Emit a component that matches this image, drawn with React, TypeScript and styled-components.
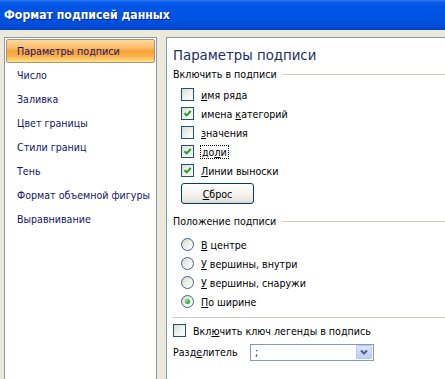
import React from "react";
import styled, { createGlobalStyle } from "styled-components";

const GlobalStyle = createGlobalStyle`
  html, body {
    margin: 0;
    padding: 0;
    background: #ece9d8;
  }
  body {
    font-family: "DejaVu Sans Condensed", "DejaVu Sans", Verdana, sans-serif;
    font-size: 10.6px;
    color: #000;
  }
`;

const Window = styled.div`
  width: 445px;
  height: 379px;
  overflow: hidden;
  display: flex;
  flex-direction: column;
  background: #ece9d8;
`;

const TitleBar = styled.div`
  height: 30px;
  flex: 0 0 auto;
  display: flex;
  align-items: center;
  padding-left: 4px;
  background: linear-gradient(
    #2a7af5 0%,
    #0a5ee8 8%,
    #0055e5 20%,
    #0053e1 60%,
    #004bd6 90%,
    #0041c4 100%
  );
  color: #fff;
  font-family: "DejaVu Sans Condensed", "DejaVu Sans", Verdana, sans-serif;
  font-weight: bold;
  font-size: 12.2px;
  text-shadow: 1px 1px 0 #0b2a8a;
`;

const Body = styled.div`
  flex: 1;
  display: flex;
  gap: 9px;
  padding: 7px 0 0 4px;
  min-height: 0;
`;

const Sidebar = styled.div`
  width: 153px;
  box-sizing: border-box;
  background: #fff;
  border: 1px solid #7f9db9;
  border-bottom: none;
  padding: 1px;
  display: flex;
  flex-direction: column;
`;

const NavItem = styled.div<{ $active?: boolean }>`
  height: 24px;
  box-sizing: border-box;
  line-height: 22px;
  padding-left: 10px;
  color: #15156a;
  white-space: nowrap;
  border: 1px solid ${(p) => (p.$active ? "#b3946a" : "transparent")};
  border-radius: 2px;
  background: ${(p) =>
    p.$active
      ? "linear-gradient(#fdd8a0 0%, #fbbd6c 35%, #f8a03a 50%, #fbb350 75%, #ffe286 100%)"
      : "transparent"};
`;

const Panel = styled.div`
  flex: 1;
  background: #fff;
  border-left: 1px solid #7f9db9;
  border-top: 1px solid #7f9db9;
  padding: 7px 0 0 6px;
  display: flex;
  flex-direction: column;
`;

const Heading = styled.div`
  font-size: 14.8px;
  line-height: 20px;
  height: 20px;
  color: #1c2f5c;
  margin-bottom: 2px;
`;

const GroupHeader = styled.div<{ $top?: number }>`
  display: flex;
  align-items: center;
  height: 14px;
  line-height: 14px;
  white-space: nowrap;
  margin-top: ${(p) => p.$top ?? 0}px;
  &::after {
    content: "";
    flex: 1;
    height: 1px;
    margin-left: 6px;
    background: #cfccc0;
  }
`;

const Group = styled.div<{ $top: number }>`
  display: flex;
  flex-direction: column;
  padding-left: 8px;
  margin-top: ${(p) => p.$top}px;
`;

const Row = styled.label`
  display: flex;
  align-items: center;
  gap: 7px;
  height: 19px;
  white-space: nowrap;
`;

const Box = styled.span`
  width: 13px;
  height: 13px;
  box-sizing: border-box;
  flex: 0 0 auto;
  border: 1px solid #1c5180;
  background: linear-gradient(135deg, #dcdcd7 0%, #f2f2ee 55%, #ffffff 100%);
  display: flex;
  align-items: center;
  justify-content: center;
`;

const Radio = styled.span`
  width: 13px;
  height: 13px;
  box-sizing: border-box;
  flex: 0 0 auto;
  border-radius: 50%;
  border: 1px solid #3b6292;
  background: linear-gradient(135deg, #d6d6cf 0%, #f1f1ec 55%, #ffffff 100%);
  display: flex;
  align-items: center;
  justify-content: center;
`;

const Dot = styled.span`
  width: 5px;
  height: 5px;
  border-radius: 50%;
  background: radial-gradient(circle at 35% 35%, #8fe08f, #21a121 70%);
`;

const Focus = styled.span`
  outline: 1px dotted #000;
  padding: 0 1px;
`;

const U = styled.span`
  text-decoration: underline;
`;

const Button = styled.div`
  width: 73px;
  height: 21px;
  margin-top: 3px;
  box-sizing: border-box;
  border: 1px solid #003c74;
  border-radius: 3px;
  background: linear-gradient(#ffffff 0%, #f5f4f0 50%, #e9e7df 85%, #d8d3c6 100%);
  display: flex;
  align-items: center;
  justify-content: center;
`;

const Separator = styled.div`
  height: 1px;
  background: #cfccc0;
  margin: 6px 0 3px -1px;
`;

const SelectRow = styled.div`
  display: flex;
  align-items: center;
  height: 20px;
  margin-top: 2px;
  white-space: nowrap;
`;

const SelectLabel = styled.span`
  width: 77px;
`;

const Select = styled.div`
  width: 124px;
  height: 17px;
  box-sizing: border-box;
  border: 1px solid #7f9db9;
  display: flex;
  align-items: center;
  justify-content: space-between;
  padding: 0 1px 0 4px;
  background: #fff;
`;

const DropButton = styled.span`
  width: 16px;
  height: 14px;
  box-sizing: border-box;
  border: 1px solid #b8c8f2;
  border-radius: 1px;
  background: linear-gradient(#dbe5fd, #bccdfa);
  display: flex;
  align-items: center;
  justify-content: center;
`;

const Check = () => (
  <svg width="9" height="9" viewBox="0 0 9 9">
    <path d="M1.5 4.2 L3.6 6.4 L7.8 2" fill="none" stroke="#21a121" strokeWidth="2" />
  </svg>
);

const CheckRow = ({ checked, children }: { checked?: boolean; children: React.ReactNode }) => (
  <Row>
    <Box>{checked && <Check />}</Box>
    <span>{children}</span>
  </Row>
);

const RadioRow = ({ checked, children }: { checked?: boolean; children: React.ReactNode }) => (
  <Row>
    <Radio>{checked && <Dot />}</Radio>
    <span>{children}</span>
  </Row>
);

const navItems = [
  "Параметры подписи",
  "Число",
  "Заливка",
  "Цвет границы",
  "Стили границ",
  "Тень",
  "Формат объемной фигуры",
  "Выравнивание",
];

export default function App() {
  return (
    <Window>
      <GlobalStyle />
      <TitleBar>Формат подписей данных</TitleBar>
      <Body>
        <Sidebar>
          {navItems.map((item, i) => (
            <NavItem key={item} $active={i === 0}>
              {item}
            </NavItem>
          ))}
        </Sidebar>
        <Panel>
          <Heading>Параметры подписи</Heading>
          <GroupHeader>Включить в подписи</GroupHeader>
          <Group $top={4}>
            <CheckRow>
              <U>и</U>мя ряда
            </CheckRow>
            <CheckRow checked>
              имена <U>к</U>атегорий
            </CheckRow>
            <CheckRow>
              <U>з</U>начения
            </CheckRow>
            <CheckRow checked>
              <Focus>
                до<U>л</U>и
              </Focus>
            </CheckRow>
            <CheckRow checked>
              <U>Л</U>инии выноски
            </CheckRow>
            <Button>
              <span>
                <U>С</U>брос
              </span>
            </Button>
          </Group>
          <GroupHeader $top={10}>Положение подписи</GroupHeader>
          <Group $top={7}>
            <RadioRow>
              <U>В</U> центре
            </RadioRow>
            <RadioRow>
              <U>У</U> вершины, внутри
            </RadioRow>
            <RadioRow>
              <U>У</U> вершины, снаружи
            </RadioRow>
            <RadioRow checked>
              <U>П</U>о ширине
            </RadioRow>
          </Group>
          <Separator />
          <CheckRow>
            Вкл<U>ю</U>чить ключ легенды в подпись
          </CheckRow>
          <SelectRow>
            <SelectLabel>
              Разд<U>е</U>литель
            </SelectLabel>
            <Select>
              <span>;</span>
              <DropButton>
                <svg width="8" height="6" viewBox="0 0 8 6">
                  <path d="M1 1.5 L4 4.5 L7 1.5" fill="none" stroke="#4d6185" strokeWidth="2" />
                </svg>
              </DropButton>
            </Select>
          </SelectRow>
        </Panel>
      </Body>
    </Window>
  );
}
